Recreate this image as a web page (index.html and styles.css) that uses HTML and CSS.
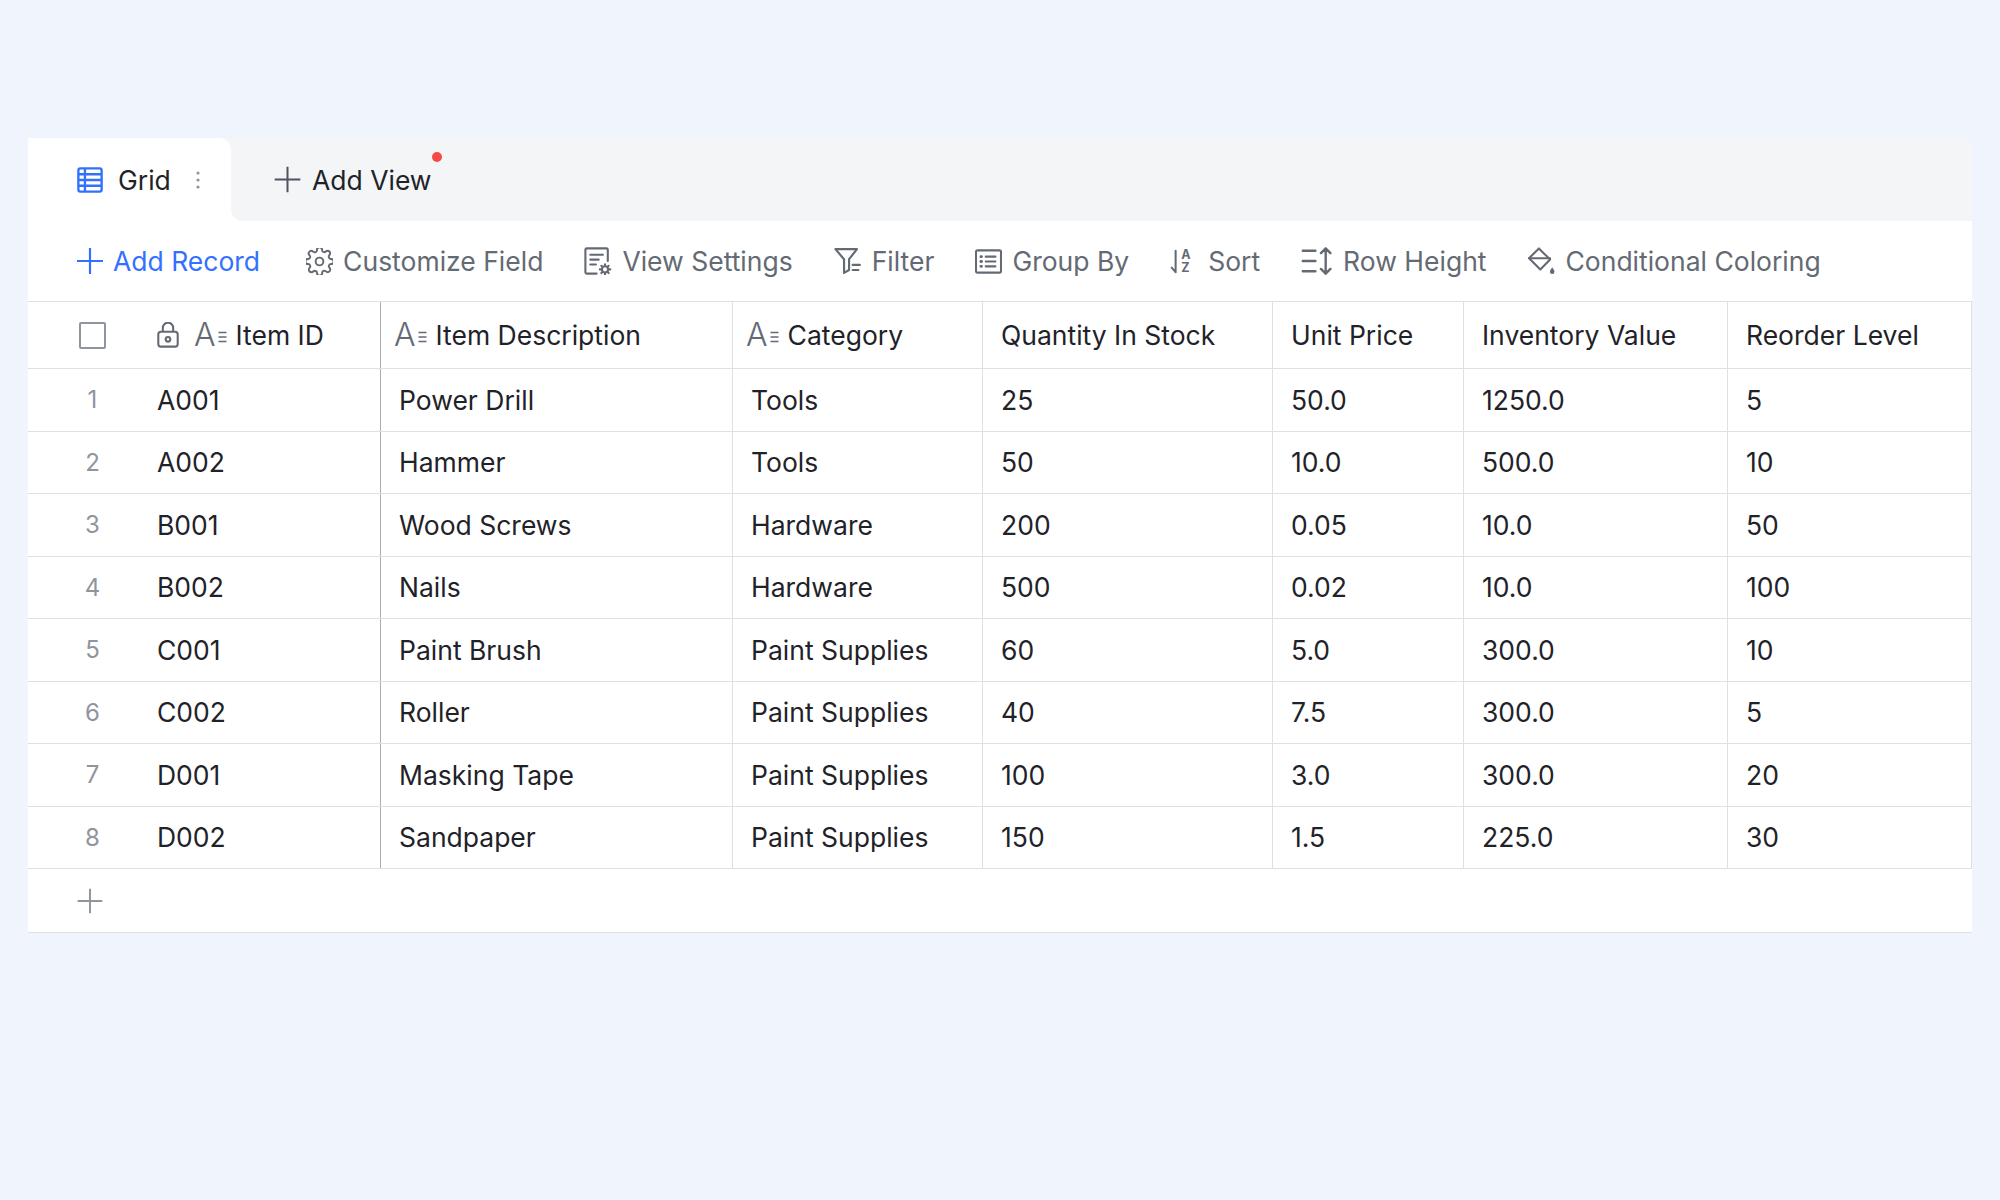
FILE: index.html
```html
<!DOCTYPE html>
<html lang="en">
<head>
<meta charset="utf-8">
<title>Grid</title>
<link rel="stylesheet" href="styles.css">
</head>
<body>
<div class="app">
  <div class="panel">
    <div class="tabbar">
      <div class="tab active">
        <svg class="ico-grid" viewBox="2.5 2.5 19 19" width="26" height="26"><rect x="3.5" y="3.5" width="17" height="17" rx="1.5"/><path d="M3.5 7.8h17M3.5 12h17M3.5 16.2h17M8.3 3.5v17"/></svg>
        <span class="tab-label">Grid</span>
        <svg class="ico-dots" viewBox="0 0 6 24" width="6" height="26"><circle cx="3" cy="5" r="1.6"/><circle cx="3" cy="12" r="1.6"/><circle cx="3" cy="19" r="1.6"/></svg>
      </div>
      <div class="tab-rest">
        <div class="tab add-view">
          <svg class="ico-plus" viewBox="2 2 20 20" width="27" height="27"><path d="M12 2.5v19M2.5 12h19"/></svg>
          <span class="tab-label badge-host">Add View<span class="red-dot"></span></span>
        </div>
      </div>
    </div>

    <div class="toolbar">
      <div class="tool primary">
        <svg viewBox="2 2 20 20" width="26" height="26"><path d="M12 2.5v19M2.5 12h19"/></svg>
        <span>Add Record</span>
      </div>
      <div class="tool">
        <svg viewBox="1.5 1.5 21 21" width="27" height="27"><circle cx="12" cy="12" r="3"/><path d="M19.4 15a1.65 1.65 0 0 0 .33 1.82l.06.06a2 2 0 1 1-2.83 2.83l-.06-.06a1.65 1.65 0 0 0-1.82-.33 1.65 1.65 0 0 0-1 1.51V21a2 2 0 1 1-4 0v-.09A1.65 1.65 0 0 0 9 19.4a1.65 1.65 0 0 0-1.82.33l-.06.06a2 2 0 1 1-2.83-2.83l.06-.06A1.65 1.65 0 0 0 4.68 15a1.65 1.65 0 0 0-1.51-1H3a2 2 0 1 1 0-4h.09A1.65 1.65 0 0 0 4.6 9a1.65 1.65 0 0 0-.33-1.82l-.06-.06a2 2 0 1 1 2.83-2.83l.06.06A1.65 1.65 0 0 0 9 4.68a1.65 1.65 0 0 0 1-1.51V3a2 2 0 1 1 4 0v.09a1.65 1.65 0 0 0 1 1.51 1.65 1.65 0 0 0 1.820-.33l.06-.06a2 2 0 1 1 2.83 2.83l-.06.06A1.65 1.65 0 0 0 19.4 9a1.65 1.65 0 0 0 1.51 1H21a2 2 0 1 1 0 4h-.09a1.65 1.65 0 0 0-1.51 1z"/></svg>
        <span>Customize Field</span>
      </div>
      <div class="tool">
        <svg viewBox="2.5 2 20 20" width="28" height="28"><path d="M11.5 21H4.5a1 1 0 0 1-1-1V4a1 1 0 0 1 1-1h14a1 1 0 0 1 1 1v8"/><path d="M7 7.5h9M7 11h6M7 14.5h4"/><circle cx="17.5" cy="18" r="2.2"/><path d="M17.5 14.3v1.3M17.5 20.4v1.3M13.8 18h1.3M20 18h1.3M14.9 15.4l.9.9M19.2 19.7l.9.9M14.9 20.6l.9-.9M19.2 16.3l.9-.9"/></svg>
        <span>View Settings</span>
      </div>
      <div class="tool">
        <svg viewBox="2 2.5 19.5 19.5" width="28" height="28"><path d="M3 4h15l-5.5 7v7.5l-3.5 2V11z"/><path d="M15 15h5M15 18.5h4"/></svg>
        <span>Filter</span>
      </div>
      <div class="tool">
        <svg viewBox="2.3 3 19.4 18" width="27" height="25"><rect x="3" y="4" width="18" height="16" rx="1"/><path d="M10 8.5h7M10 12h7M10 15.5h7"/><path d="M6.5 8.5h.5M6.5 12h.5M6.5 15.5h.5" stroke-width="2"/></svg>
        <span>Group By</span>
      </div>
      <div class="tool">
        <span class="sort-ico">
          <svg viewBox="0 0 8 24" width="9" height="27"><path d="M5 2.5v19M1.5 17.5L5 21.5"/></svg>
          <span class="az"><span>A</span><span>Z</span></span>
        </span>
        <span>Sort</span>
      </div>
      <div class="tool">
        <svg viewBox="2 2.5 20 19" width="32" height="30"><path d="M3 5.5h8M3 12h8M3 18.5h8"/><path d="M17.5 4v16M14.5 7l3-3 3 3M14.5 17l3 3 3-3"/></svg>
        <span>Row Height</span>
      </div>
      <div class="tool">
        <svg viewBox="2.5 2 20 20" width="28" height="28"><path d="M11 3l8 8-7 7-8-8z"/><path d="M4 10h15"/><path d="M20.5 16.5c1 1.5 1.6 2.4 1.6 3.2a1.6 1.6 0 0 1-3.2 0c0-.8.6-1.7 1.6-3.2z" class="fill"/></svg>
        <span>Conditional Coloring</span>
      </div>
    </div>

    <div class="grid">
      <div class="row head">
        <div class="cell num"><span class="checkbox"></span></div>
        <div class="cell first">
          <svg class="ico-lock" viewBox="3.5 2.5 17 20" width="22" height="26"><rect x="4.5" y="10" width="15" height="11.5" rx="2"/><path d="M8 10V7a4 4 0 0 1 8 0v3"/><circle cx="12" cy="15.8" r="1.8"/></svg>
          <span class="field-ico"><span class="fa">A</span><svg viewBox="0 0 10 24" width="11" height="24"><path d="M1 9.5h8M1 14h8M1 18.5h8"/></svg></span>
          <span>Item ID</span>
        </div>
        <div class="cell icon-cell"><span class="field-ico"><span class="fa">A</span><svg viewBox="0 0 10 24" width="11" height="24"><path d="M1 9.5h8M1 14h8M1 18.5h8"/></svg></span><span>Item Description</span></div>
        <div class="cell icon-cell"><span class="field-ico"><span class="fa">A</span><svg viewBox="0 0 10 24" width="11" height="24"><path d="M1 9.5h8M1 14h8M1 18.5h8"/></svg></span><span>Category</span></div>
        <div class="cell">Quantity In Stock</div>
        <div class="cell">Unit Price</div>
        <div class="cell">Inventory Value</div>
        <div class="cell">Reorder Level</div>
      </div>

      <div class="row"><div class="cell num">1</div><div class="cell first">A001</div><div class="cell">Power Drill</div><div class="cell">Tools</div><div class="cell">25</div><div class="cell">50.0</div><div class="cell">1250.0</div><div class="cell">5</div></div>
      <div class="row"><div class="cell num">2</div><div class="cell first">A002</div><div class="cell">Hammer</div><div class="cell">Tools</div><div class="cell">50</div><div class="cell">10.0</div><div class="cell">500.0</div><div class="cell">10</div></div>
      <div class="row"><div class="cell num">3</div><div class="cell first">B001</div><div class="cell">Wood Screws</div><div class="cell">Hardware</div><div class="cell">200</div><div class="cell">0.05</div><div class="cell">10.0</div><div class="cell">50</div></div>
      <div class="row"><div class="cell num">4</div><div class="cell first">B002</div><div class="cell">Nails</div><div class="cell">Hardware</div><div class="cell">500</div><div class="cell">0.02</div><div class="cell">10.0</div><div class="cell">100</div></div>
      <div class="row"><div class="cell num">5</div><div class="cell first">C001</div><div class="cell">Paint Brush</div><div class="cell">Paint Supplies</div><div class="cell">60</div><div class="cell">5.0</div><div class="cell">300.0</div><div class="cell">10</div></div>
      <div class="row"><div class="cell num">6</div><div class="cell first">C002</div><div class="cell">Roller</div><div class="cell">Paint Supplies</div><div class="cell">40</div><div class="cell">7.5</div><div class="cell">300.0</div><div class="cell">5</div></div>
      <div class="row"><div class="cell num">7</div><div class="cell first">D001</div><div class="cell">Masking Tape</div><div class="cell">Paint Supplies</div><div class="cell">100</div><div class="cell">3.0</div><div class="cell">300.0</div><div class="cell">20</div></div>
      <div class="row"><div class="cell num">8</div><div class="cell first">D002</div><div class="cell">Sandpaper</div><div class="cell">Paint Supplies</div><div class="cell">150</div><div class="cell">1.5</div><div class="cell">225.0</div><div class="cell">30</div></div>

      <div class="add-row">
        <svg viewBox="2 2 20 20" width="26" height="26"><path d="M12 2.5v19M2.5 12h19"/></svg>
      </div>
    </div>
  </div>
</div>
</body>
</html>
```

FILE: styles.css
```css
* { box-sizing: border-box; }

html, body {
  margin: 0;
  padding: 0;
}

body {
  background: #f0f4fd;
  font-family: Inter, "Noto Sans", "Liberation Sans", sans-serif;
  color: #1f2329;
  width: 2000px;
  height: 1200px;
}

.app {
  padding: 138px 0 0 28px;
}

.panel {
  width: 1944px;
  background: #ffffff;
}

/* Tabs */
.tabbar {
  display: flex;
  height: 83px;
  background: linear-gradient(#f4f5f7 50%, #ffffff 50%);
}

.tab {
  display: flex;
  align-items: center;
  font-size: 26.5px;
  color: #1f2329;
}

.tab.active {
  width: 203px;
  background: #ffffff;
  border-top-right-radius: 12px;
  padding-left: 49px;
}

.tab-rest {
  flex: 1;
  background: #f4f5f7;
  border-bottom-left-radius: 12px;
  display: flex;
  align-items: center;
  padding-left: 43px;
}

.ico-grid {
  fill: none;
  stroke: #3370ff;
  stroke-width: 1.7;
}

.tab.active .tab-label {
  margin-left: 15px;
}

.ico-dots {
  fill: #8f959e;
  margin-left: 24px;
}

.ico-plus {
  fill: none;
  stroke: #4e5561;
  stroke-width: 1.5;
}

.add-view .tab-label {
  margin-left: 11px;
}

.badge-host {
  position: relative;
  line-height: 30px;
}

.red-dot {
  position: absolute;
  right: -10px;
  top: -13px;
  width: 10px;
  height: 10px;
  border-radius: 50%;
  background: #f54a45;
}

/* Toolbar */
.toolbar {
  display: flex;
  align-items: center;
  gap: 41px;
  height: 80px;
  padding-left: 49px;
}

.tool {
  display: flex;
  align-items: center;
  gap: 10px;
  font-size: 26.5px;
  color: #646a73;
}

.tool svg {
  fill: none;
  stroke: #646a73;
  stroke-width: 1.5;
  stroke-linecap: round;
  stroke-linejoin: round;
}

.tool svg .fill {
  fill: #646a73;
  stroke: none;
}

.tool.primary {
  color: #3370ff;
  margin-right: 5px;
}

.tool.primary svg {
  stroke: #3370ff;
  stroke-width: 1.7;
}

.sort-ico {
  display: inline-flex;
  align-items: center;
  gap: 2px;
  width: 28px;
}

.sort-ico svg {
  stroke-width: 1.8;
}

.az {
  display: flex;
  flex-direction: column;
  font-size: 12.5px;
  line-height: 13px;
  font-weight: 700;
  color: #646a73;
}

/* Grid */
.grid {
  font-size: 26.5px;
}

.row {
  display: grid;
  grid-template-columns: 129px 224px 352px 250px 290px 191px 264px 244px;
  height: 62.5px;
  border-bottom: 1px solid #dee0e3;
}

.row.head {
  height: 68px;
  border-top: 1px solid #dee0e3;
}

.cell {
  display: flex;
  align-items: center;
  padding-left: 18px;
  border-right: 1px solid #dee0e3;
  white-space: nowrap;
  color: #1f2329;
}

.cell.num {
  justify-content: center;
  padding-left: 0;
  border-right: none;
  color: #8f959e;
  font-size: 24px;
}

.cell.first {
  padding-left: 0;
  border-right-color: #a9adb4;
}

.cell.icon-cell {
  padding-left: 13px;
}

.checkbox {
  display: block;
  width: 27px;
  height: 27px;
  border: 2px solid #8f959e;
  border-radius: 2px;
}

.ico-lock {
  fill: none;
  stroke: #646a73;
  stroke-width: 1.6;
  margin-right: 15px;
}

.field-ico {
  display: inline-flex;
  align-items: center;
  margin-right: 8px;
  color: #646a73;
}

.field-ico .fa {
  font-size: 32px;
  font-weight: 300;
  line-height: 1;
}

.field-ico svg {
  fill: none;
  stroke: #646a73;
  stroke-width: 1.4;
  margin-left: 1px;
}

.add-row {
  height: 64px;
  display: flex;
  align-items: center;
  padding-left: 49px;
  border-bottom: 1px solid #dee0e3;
}

.add-row svg {
  fill: none;
  stroke: #8f959e;
  stroke-width: 1.5;
}
```
